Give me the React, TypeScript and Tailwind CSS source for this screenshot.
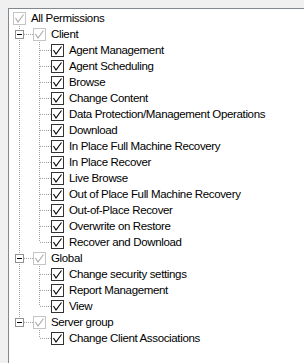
import React from "react";

type Node = { label: string; children?: Node[] };

const tree: Node = {
  label: "All Permissions",
  children: [
    {
      label: "Client",
      children: [
        "Agent Management",
        "Agent Scheduling",
        "Browse",
        "Change Content",
        "Data Protection/Management Operations",
        "Download",
        "In Place Full Machine Recovery",
        "In Place Recover",
        "Live Browse",
        "Out of Place Full Machine Recovery",
        "Out-of-Place Recover",
        "Overwrite on Restore",
        "Recover and Download",
      ].map((label) => ({ label })),
    },
    {
      label: "Global",
      children: ["Change security settings", "Report Management", "View"].map((label) => ({ label })),
    },
    {
      label: "Server group",
      children: [{ label: "Change Client Associations" }],
    },
  ],
};

const LINE = "#a0a0a0";

function CheckBox({ disabled }: { disabled?: boolean }) {
  const border = disabled ? "#c4c4c4" : "#333333";
  const mark = disabled ? "#a9a9a9" : "#000000";
  return (
    <svg width="13" height="13" viewBox="0 0 13 13" className="shrink-0 block">
      <rect x="0.5" y="0.5" width="12" height="12" fill="#ffffff" stroke={border} />
      <polyline points="2.5,6 5,10 10.5,2.5" fill="none" stroke={mark} strokeWidth="1.1" />
    </svg>
  );
}

function VLine({ x, y1, y2 }: { x: number; y1: number; y2: number }) {
  return (
    <line x1={x + 0.5} x2={x + 0.5} y1={y1} y2={y2} stroke={LINE} strokeDasharray="1 1" shapeRendering="crispEdges" />
  );
}
function HLine({ y, x1, x2 }: { y: number; x1: number; x2: number }) {
  return (
    <line x1={x1} x2={x2} y1={y + 0.5} y2={y + 0.5} stroke={LINE} strokeDasharray="1 1" shapeRendering="crispEdges" />
  );
}

function Row({ gutter, disabled, label }: { gutter: React.ReactNode; disabled?: boolean; label: string }) {
  return (
    <div className="flex h-4 items-center">
      {gutter}
      <CheckBox disabled={disabled} />
      <span className="ml-[5px] whitespace-nowrap text-[11.5px] leading-4 tracking-[-0.35px] text-black">{label}</span>
    </div>
  );
}

export default function App() {
  const level1 = tree.children!;
  return (
    <div
      className="w-[304px] h-[363px] overflow-hidden bg-[#f0f0f0] pl-[8px] pt-[8px]"
      style={{ fontFamily: '"Liberation Sans", Arial, sans-serif' }}
    >
      <div className="h-[400px] w-[320px] border-l border-t border-[#828790] bg-white pt-[1px]">
        <div className="flex h-4 items-center pl-[4px]">
          <CheckBox disabled />
          <span className="ml-[5px] whitespace-nowrap text-[11.5px] leading-4 tracking-[-0.35px] text-black">{tree.label}</span>
        </div>
        {level1.map((n, i) => {
          const lastL1 = i === level1.length - 1;
          return (
            <React.Fragment key={n.label}>
              <Row
                disabled
                label={n.label}
                gutter={
                  <svg width="24" height="16" className="block shrink-0">
                    <VLine x={10} y1={0} y2={lastL1 ? 8 : 16} />
                    <HLine y={8} x1={15} x2={24} />
                    <rect x="6.5" y="4.5" width="8" height="8" fill="#ffffff" stroke="#919191" shapeRendering="crispEdges" />
                    <line x1="8" x2="13" y1="8.5" y2="8.5" stroke="#000" shapeRendering="crispEdges" />
                  </svg>
                }
              />
              {n.children!.map((c, j) => {
                const last = j === n.children!.length - 1;
                return (
                  <Row
                    key={c.label}
                    label={c.label}
                    gutter={
                      <svg width="42" height="16" className="block shrink-0">
                        {!lastL1 && <VLine x={10} y1={0} y2={16} />}
                        <VLine x={30} y1={0} y2={last ? 8 : 16} />
                        <HLine y={8} x1={31} x2={42} />
                      </svg>
                    }
                  />
                );
              })}
            </React.Fragment>
          );
        })}
      </div>
    </div>
  );
}
